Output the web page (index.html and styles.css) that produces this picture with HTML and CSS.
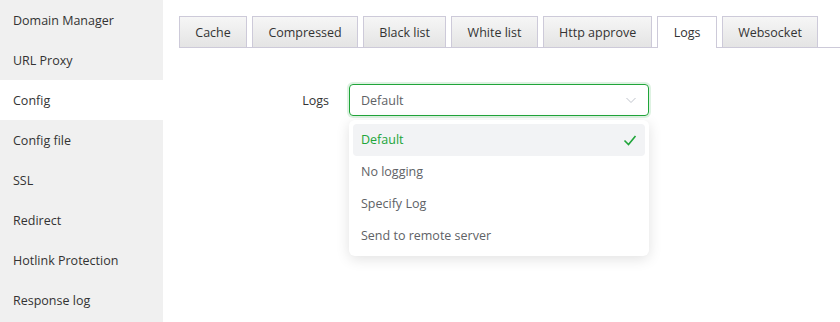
FILE: index.html
```html
<!DOCTYPE html>
<html lang="en">
<head>
    <meta charset="UTF-8">
    <title>Config - Logs</title>
    <link rel="stylesheet" href="styles.css">
</head>
<body>
    <div class="layout">
        <div class="sidebar">
            <div class="nav-item">Domain Manager</div>
            <div class="nav-item">URL Proxy</div>
            <div class="nav-item active">Config</div>
            <div class="nav-item">Config file</div>
            <div class="nav-item">SSL</div>
            <div class="nav-item">Redirect</div>
            <div class="nav-item">Hotlink Protection</div>
            <div class="nav-item">Response log</div>
        </div>

        <div class="main">
            <div class="tabs">
                <div class="tab">Cache</div>
                <div class="tab">Compressed</div>
                <div class="tab">Black list</div>
                <div class="tab">White list</div>
                <div class="tab">Http approve</div>
                <div class="tab active">Logs</div>
                <div class="tab">Websocket</div>
            </div>

            <div class="form-row">
                <label class="form-label">Logs</label>
                <div class="select-wrap">
                    <div class="select">
                        <span>Default</span>
                        <svg class="arrow" width="12" height="12" viewBox="0 0 12 12"><path d="M1.5 4 L6 8.5 L10.5 4" fill="none" stroke="#c0c4cc" stroke-width="1"/></svg>
                    </div>
                    <div class="dropdown">
                        <div class="option selected">
                            <span>Default</span>
                            <svg width="14" height="14" viewBox="0 0 14 14"><path d="M1.5 7.5 L5.5 11.5 L12.5 3" fill="none" stroke="#20a53a" stroke-width="1.6"/></svg>
                        </div>
                        <div class="option">No logging</div>
                        <div class="option">Specify Log</div>
                        <div class="option">Send to remote server</div>
                    </div>
                </div>
            </div>
        </div>
    </div>
</body>
</html>
```

FILE: styles.css
```css
body { margin: 0; font-family: "Open Sans", "Noto Sans", sans-serif; font-size: 12.5px; color: #333; background: #fff; }
.layout { display: flex; height: 322px; overflow: hidden; }
.sidebar { width: 163px; flex-shrink: 0; background: #f0f0f0; }
.nav-item { height: 39px; line-height: 39px; padding: 1px 0 0 13px; color: #333; }
.nav-item.active { background: #fff; }
.main { flex: 1; padding: 16px 0 0 16px; }
.tabs { display: flex; gap: 5px; border-bottom: 1px solid #cdcad9; height: 31px; }
.tab { height: 29px; line-height: 29px; padding: 1px 15.3px 0; border: 1px solid #cdcad9; border-bottom: none; background: linear-gradient(#f6f6f6, #e4e4e4); color: #333; }
.tab.active { background: #fff; height: 30px; margin-bottom: -1px; }
.form-row { display: flex; align-items: center; margin-top: 36px; }
.form-label { width: 150px; text-align: right; margin-right: 20px; color: #333; }
.select-wrap { position: relative; width: 300px; }
.select { height: 30px; border: 1px solid #20a53a; border-radius: 4px; box-shadow: 0 0 0 2px rgba(32,165,58,0.15); display: flex; align-items: center; justify-content: space-between; padding: 0 11px; color: #606266; }
.dropdown { position: absolute; top: 36px; left: 0; right: 0; background: #fff; border-radius: 6px; padding: 4px; box-shadow: 0 3px 14px rgba(0,0,0,0.12); }
.option { height: 32px; line-height: 32px; padding: 0 8px; border-radius: 4px; color: #606266; display: flex; align-items: center; justify-content: space-between; }
.option.selected { background: #f2f3f5; color: #20a53a; }
```
